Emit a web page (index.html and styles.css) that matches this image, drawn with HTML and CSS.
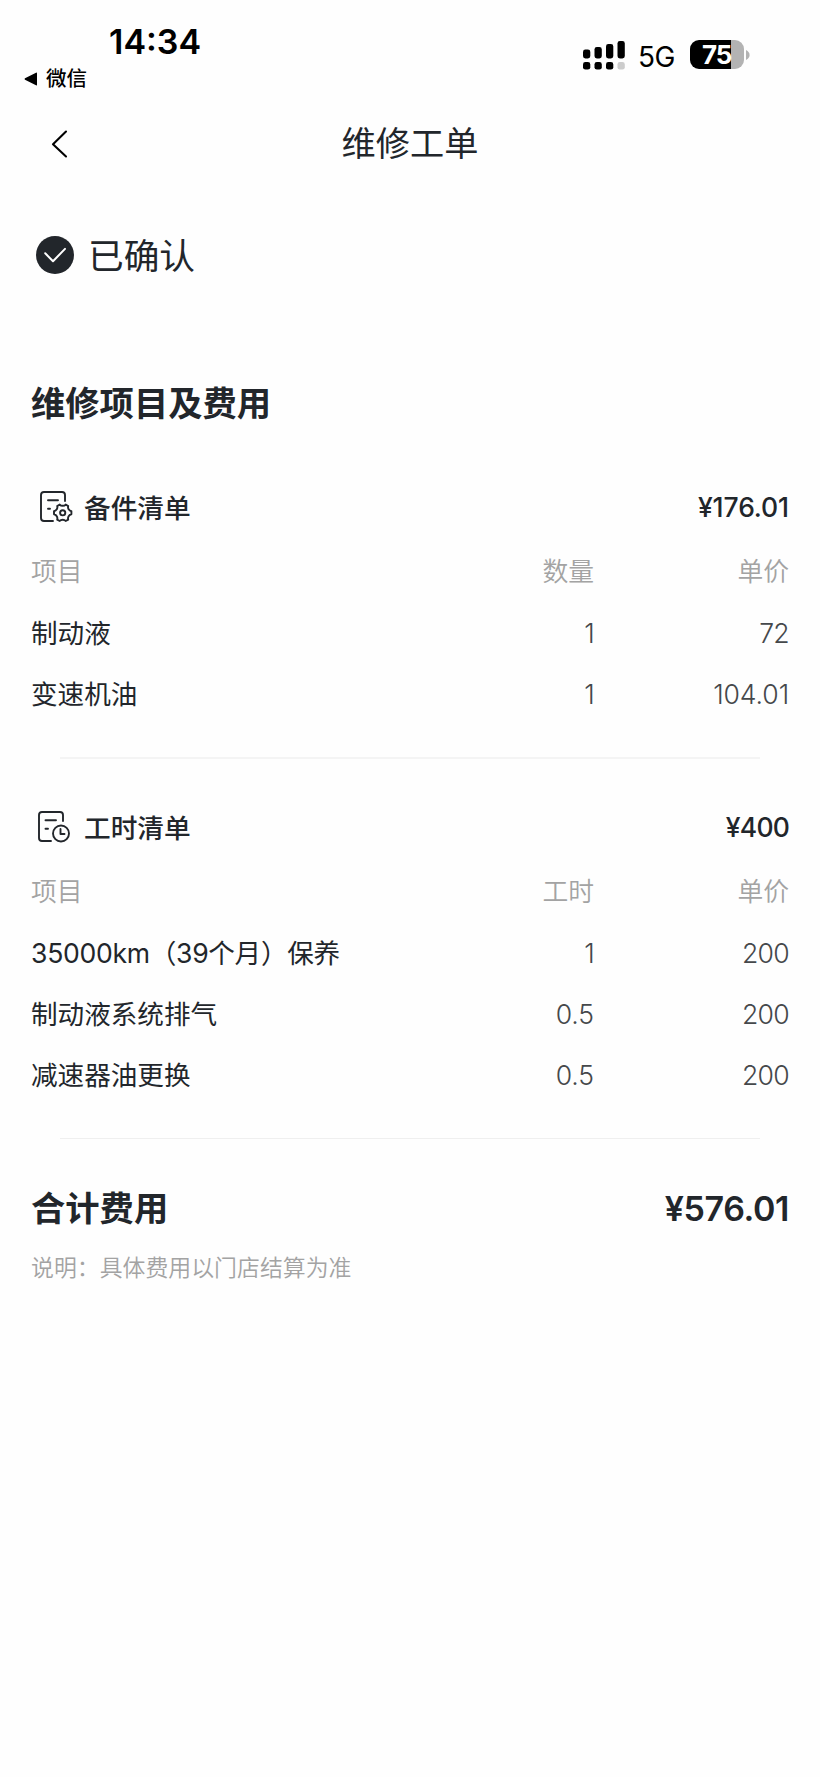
FILE: index.html
```html
<!DOCTYPE html>
<html lang="zh-CN">
<head>
<meta charset="utf-8">
<title>维修工单</title>
<link rel="stylesheet" href="styles.css">
</head>
<body>
<div class="status-bar">
  <div class="status-left">
    <div class="clock">14:34</div>
    <div class="back-app"><svg width="14" height="14" viewBox="0 0 14 14"><path d="M13 1.2v11.6Q13 13.8 12 13.3L1 7.8Q0 7 1 6.2L12 .7Q13 .2 13 1.2z"/></svg><span>微信</span></div>
  </div>
  <div class="status-right">
    <svg class="signal" width="42" height="30" viewBox="0 0 42 30">
      <rect x="0" y="9.5" width="7.3" height="9" rx="2.4"/><rect x="11.5" y="7" width="7.3" height="11.5" rx="2.4"/><rect x="23" y="4" width="7.3" height="14.5" rx="2.4"/><rect x="34.5" y="1" width="7.3" height="17.5" rx="2.4"/>
      <rect x="0" y="22" width="7.3" height="7.6" rx="2.4"/><rect x="11.5" y="22" width="7.3" height="7.6" rx="2.4"/><rect x="23" y="22" width="7.3" height="7.6" rx="2.4"/><rect x="34.5" y="22" width="7.3" height="7.6" rx="2.4" fill="#ccc"/>
    </svg>
    <span class="network">5G</span>
    <div class="battery"><span>75</span></div>
    <svg class="battery-tip" width="4" height="10" viewBox="0 0 4 10"><path d="M0 0Q3.6 1.8 3.6 5T0 10z" fill="#b3b3b3"/></svg>
  </div>
</div>
<header class="nav">
  <svg class="nav-back" width="17" height="28" viewBox="0 0 17 28"><path d="M15 1.5L2 14.2 15 26.5" fill="none" stroke="#000" stroke-width="2.1" stroke-linecap="round" stroke-linejoin="round"/></svg>
  <h1>维修工单</h1>
</header>
<div class="state">
  <svg width="38" height="38" viewBox="0 0 38 38"><circle cx="19" cy="19" r="19" fill="#22262b"/><path d="M9.2 17.3L17 25.2 29 12.9" fill="none" stroke="#fff" stroke-width="2" stroke-linecap="round" stroke-linejoin="round"/></svg>
  <span>已确认</span>
</div>
<main>
  <h2>维修项目及费用</h2>
  <section class="list">
    <div class="list-head">
      <svg class="icon-parts" width="34" height="34" viewBox="0 0 34 34" fill="none" stroke="#22262b" stroke-width="1.9" stroke-linecap="round" stroke-linejoin="round">
        <path d="M14 31H5Q2 31 2 28V5Q2 2 5 2H23Q26 2 26 5V11M9 10.2H19M9 18.8H11"/>
        <path d="M20.7 14.6C22 16.2 25.4 16.2 26.7 14.6L29.2 16C28.5 18.2 30 20.8 32.4 21.3V24.3C30 24.8 28.5 27.4 29.2 29.6L26.7 31C25.4 29.4 22 29.4 20.7 31L18.2 29.6C18.9 27.4 17.4 24.8 15 24.3V21.3C17.4 20.8 18.9 18.2 18.2 16Z"/><circle cx="23.7" cy="22.8" r="2.6"/>
      </svg>
      <h3>备件清单</h3><strong class="decimal">¥176.01</strong>
    </div>
    <div class="row labels"><span>项目</span><span>数量</span><span>单价</span></div>
    <div class="row"><span>制动液</span><span class="num">1</span><span class="num">72</span></div>
    <div class="row"><span>变速机油</span><span class="num">1</span><span class="num decimal">104.01</span></div>
  </section>
  <section class="list">
    <div class="list-head">
      <svg class="icon-hours" width="34" height="34" viewBox="0 0 34 34" fill="none" stroke="#22262b" stroke-width="1.9" stroke-linecap="round" stroke-linejoin="round">
        <path d="M14 31H5Q2 31 2 28V5Q2 2 5 2H23Q26 2 26 5V11M8.5 10.2H19M8.5 18.8H11"/>
        <circle cx="24" cy="23.5" r="8"/><path d="M23.5 19V24H27.5"/>
      </svg>
      <h3>工时清单</h3><strong>¥400</strong>
    </div>
    <div class="row labels"><span>项目</span><span>工时</span><span>单价</span></div>
    <div class="row"><span class="mixed">35000km（39个月）保养</span><span class="num">1</span><span class="num">200</span></div>
    <div class="row"><span>制动液系统排气</span><span class="num decimal">0.5</span><span class="num">200</span></div>
    <div class="row"><span>减速器油更换</span><span class="num decimal">0.5</span><span class="num">200</span></div>
  </section>
  <div class="total"><h2>合计费用</h2><strong>¥576.01</strong></div>
  <p class="note">说明：具体费用以门店结算为准</p>
</main>
</body>
</html>
```
FILE: styles.css
```css
* { box-sizing: border-box; }
body {
  margin: 0;
  min-height: 1777px;
  background: #fefefe;
  color: #22262b;
  font-family: Inter, "Noto Sans CJK SC", sans-serif;
}
h1, h2, h3, p { margin: 0; }
svg { display: block; flex: none; }
.status-bar {
  display: flex;
  justify-content: space-between;
  height: 100px;
  padding: 22px 70px 0 24px;
  color: #000;
}
.clock { padding-left: 85px; font-size: 34px; font-weight: 600; line-height: 40px; }
.back-app { display: flex; align-items: center; gap: 8px; margin-top: 4px; font-size: 20.5px; line-height: 26px; font-weight: 500; }
.status-right { display: flex; align-items: center; height: 29px; margin-top: 18px; }
.network { width: 51px; padding-left: 13px; font-size: 28px; line-height: 34px; margin-top: 4px; letter-spacing: -.5px; }
.battery {
  width: 54px;
  height: 29px;
  margin-left: 14px;
  border-radius: 9px;
  background: linear-gradient(90deg, #000 41px, #b3b3b3 41px);
  color: #fff;
  font-size: 26px;
  font-weight: 700;
  line-height: 30px;
  padding-left: 12px;
  letter-spacing: -1px;
}
.battery-tip { margin-left: 2px; }
.nav { display: grid; grid-template-columns: 100px 1fr 100px; align-items: center; height: 88px; }
.nav-back { margin-left: 51px; }
.nav h1 { text-align: center; font-size: 34.2px; font-weight: 400; line-height: 50px; }
.state { display: flex; align-items: center; gap: 14px; height: 134px; padding-left: 36px; font-size: 35.7px; }
.state span { padding-bottom: 4px; }
main { display: flex; flex-direction: column; padding: 56px 31px 0; }
h2 { font-size: 34.3px; font-weight: 600; line-height: 52px; }
.list { display: flex; flex-direction: column; }
.list:nth-of-type(1) { margin-top: 44px; }
.list:nth-of-type(2) { padding-top: 35px; }
.list::after { content: ""; height: 2px; margin: 33px 29px 0; background: #f4f4f4; }
.list:nth-of-type(2)::after { height: 1px; background: #efefef; }
.list-head { display: flex; align-items: center; height: 67px; }
.list-head h3 { flex: 1; padding-bottom: 3px; font-size: 26.7px; font-weight: 500; }
.list-head strong { padding-bottom: 1px; font-size: 26.5px; font-weight: 500; letter-spacing: -.8px; }
.list-head .decimal { letter-spacing: -.1px; }
.icon-parts { margin: 0 11px 2px 8px; }
.icon-hours { margin: 0 13px 2px 6px; }
.row {
  display: grid;
  grid-template-columns: 1fr 164px 195px;
  align-items: center;
  height: 61px;
  font-size: 26.6px;
  line-height: 40px;
}
.row span:nth-child(n+2) { text-align: right; }
.row .num { color: #45484b; font-weight: 350; letter-spacing: -.7px; }
.row .decimal { letter-spacing: -.1px; }
.row .mixed { letter-spacing: -.3px; }
.labels { color: #a3a3a3; font-size: 25.8px; font-weight: 350; }
.total { display: flex; align-items: center; justify-content: space-between; margin-top: 42px; height: 56px; }
.total strong { padding-bottom: 2px; font-size: 34px; font-weight: 600; letter-spacing: -.4px; }
.note { margin-top: 14px; color: #a3a3a3; font-size: 22.9px; line-height: 34px; font-weight: 350; }
```
